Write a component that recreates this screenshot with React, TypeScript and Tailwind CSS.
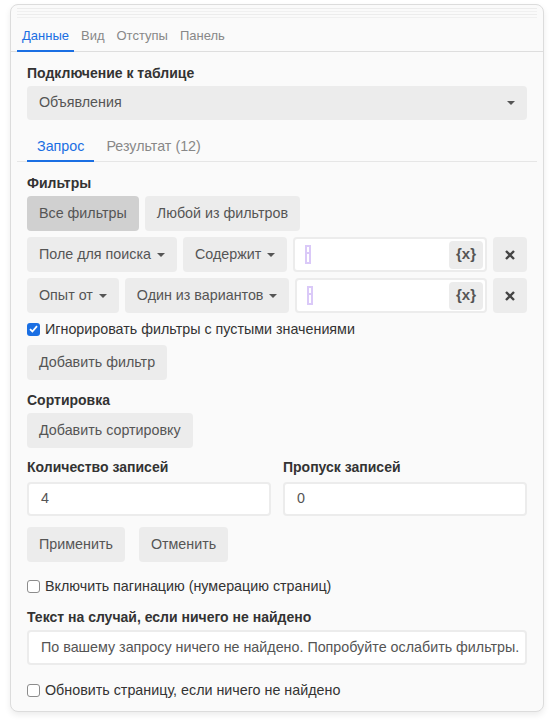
import { ReactNode } from "react";

const Caret = () => (
  <svg width="8" height="4" viewBox="0 0 8 4" className="ml-[6px] shrink-0">
    <path d="M0 0h8L4 4z" fill="#555" />
  </svg>
);

function Btn({
  children,
  active,
  caret,
  className = "",
}: {
  children: ReactNode;
  active?: boolean;
  caret?: boolean;
  className?: string;
}) {
  return (
    <button
      className={`flex h-[35px] shrink-0 items-center rounded-[4px] px-[12px] text-[14.3px] text-[#555] ${
        active ? "bg-[#d0d0d0]" : "bg-[#ececec]"
      } ${className}`}
    >
      {children}
      {caret && <Caret />}
    </button>
  );
}

function Check({ checked, label }: { checked?: boolean; label: string }) {
  return (
    <label className="flex items-center gap-[5px] text-[14.3px] leading-[16px] text-[#333]">
      {checked ? (
        <span className="flex h-[13px] w-[13px] items-center justify-center rounded-[3px] bg-[#1a6fe3]">
          <svg width="9" height="8" viewBox="0 0 9 8">
            <path d="M1 4.2 3.4 6.5 8 1.2" stroke="#fff" strokeWidth="1.8" fill="none" />
          </svg>
        </span>
      ) : (
        <span className="h-[13px] w-[13px] rounded-[3px] border border-[#8c8c8c] bg-white" />
      )}
      {label}
    </label>
  );
}

const Heading = ({ children, className = "" }: { children: ReactNode; className?: string }) => (
  <div className={`text-[14px] font-bold leading-[16px] text-[#333] ${className}`}>{children}</div>
);

function FilterRow({ field, op }: { field: string; op: string }) {
  return (
    <div className="flex gap-[6px]">
      <Btn caret>{field}</Btn>
      <Btn caret>{op}</Btn>
      <div className="flex h-[35px] flex-1 items-center rounded-[4px] border-2 border-[#ececec] bg-white pl-[10px] pr-[2px]">
        {/* empty editable value marker */}
        <span className="flex h-[19px] w-[6px] flex-col border-2 border-[#dac9f8]">
          <span className="mt-[5px] h-[2px] bg-[#dac9f8]" />
        </span>
        <span className="ml-auto flex h-[28px] w-[34px] items-center justify-center rounded-[4px] bg-[#ececec] text-[15px] font-bold text-[#555]">
          {"{x}"}
        </span>
      </div>
      <button className="flex h-[35px] w-[34px] shrink-0 items-center justify-center rounded-[4px] bg-[#ececec]">
        <svg width="10" height="10" viewBox="0 0 10 10">
          <path d="M1 1l8 8M9 1 1 9" stroke="#444" strokeWidth="2.4" />
        </svg>
      </button>
    </div>
  );
}

const mainTabs = ["Данные", "Вид", "Отступы", "Панель"];

export default function App() {
  return (
    <div className="min-h-[728px] bg-white pt-[4px] font-['Liberation_Sans',Arial,sans-serif]">
      <div className="mx-[10px] rounded-[8px] border border-[#dcdcdc] bg-[#fafafa] shadow-[0_3px_6px_rgba(0,0,0,0.08)]">
        {/* collapsed header strip */}
        <div className="mx-[6px] flex h-[14px] flex-col gap-[2px] pt-[3px]">
          <div className="h-px bg-[#ececec]" />
          <div className="h-px bg-[#f0f0f0]" />
          <div className="h-px bg-[#ececec]" />
          <div className="h-px bg-[#f0f0f0]" />
        </div>

        <div className="flex gap-[2px] border-b border-[#dedede] pl-[6px]">
          {mainTabs.map((t, i) => (
            <div
              key={t}
              className={`-mb-px border-b-2 px-[5px] pb-[6px] pt-[9px] text-[13px] leading-[16px] ${
                i === 0 ? "border-[#1a6fe3] text-[#1a6fe3]" : "border-transparent text-[#888]"
              }`}
            >
              {t}
            </div>
          ))}
        </div>

        <div className="px-[16px] pb-[13px]">
          <Heading className="mt-[13px]">Подключение к таблице</Heading>
          <div className="mt-[5px] flex h-[34px] items-center justify-between rounded-[4px] bg-[#ececec] pl-[12px] pr-[12px] text-[14.3px] text-[#555]">
            Объявления
            <Caret />
          </div>

          <div className="mx-[-10px] mt-[8px] flex gap-[2px] border-b border-[#e6e6e6] pl-[10px]">
            <div className="-mb-px border-b-2 border-[#1a6fe3] px-[10px] pb-[6px] pt-[10px] text-[14.3px] leading-[16px] text-[#1a6fe3]">
              Запрос
            </div>
            <div className="-mb-px border-b-2 border-transparent px-[10px] pb-[6px] pt-[10px] text-[14.3px] leading-[16px] text-[#888]">
              Результат (12)
            </div>
          </div>

          <Heading className="mt-[13px]">Фильтры</Heading>
          <div className="mt-[5px] flex flex-col gap-[6px]">
            <div className="flex gap-[6px]">
              <Btn active>Все фильтры</Btn>
              <Btn>Любой из фильтров</Btn>
            </div>
            <FilterRow field="Поле для поиска" op="Содержит" />
            <FilterRow field="Опыт от" op="Один из вариантов" />
          </div>

          <div className="mt-[8px]">
            <Check checked label="Игнорировать фильтры с пустыми значениями" />
          </div>
          <div className="mt-[8px] flex">
            <Btn>Добавить фильтр</Btn>
          </div>

          <Heading className="mt-[12px]">Сортировка</Heading>
          <div className="mt-[5px] flex">
            <Btn>Добавить сортировку</Btn>
          </div>

          <div className="mt-[11px] grid grid-cols-2 gap-x-[12px]">
            <div>
              <Heading>Количество записей</Heading>
              <div className="mt-[7px] flex h-[34px] items-center rounded-[4px] border-2 border-[#ececec] bg-white px-[12px] text-[14.3px] text-[#555]">
                4
              </div>
            </div>
            <div>
              <Heading>Пропуск записей</Heading>
              <div className="mt-[7px] flex h-[34px] items-center rounded-[4px] border-2 border-[#ececec] bg-white px-[12px] text-[14.3px] text-[#555]">
                0
              </div>
            </div>
          </div>

          <div className="mt-[11px] flex gap-[14px]">
            <Btn>Применить</Btn>
            <Btn>Отменить</Btn>
          </div>

          <div className="mt-[16px]">
            <Check label="Включить пагинацию (нумерацию страниц)" />
          </div>

          <Heading className="mt-[15px]">Текст на случай, если ничего не найдено</Heading>
          <div className="mt-[5px] flex h-[35px] items-center overflow-hidden whitespace-nowrap rounded-[4px] border-2 border-[#ececec] bg-white pl-[12px] pr-[10px] text-[14.3px] text-[#555]">
            По вашему запросу ничего не найдено. Попробуйте ослабить фильтры.
          </div>

          <div className="mt-[17px]">
            <Check label="Обновить страницу, если ничего не найдено" />
          </div>
        </div>
      </div>
    </div>
  );
}
